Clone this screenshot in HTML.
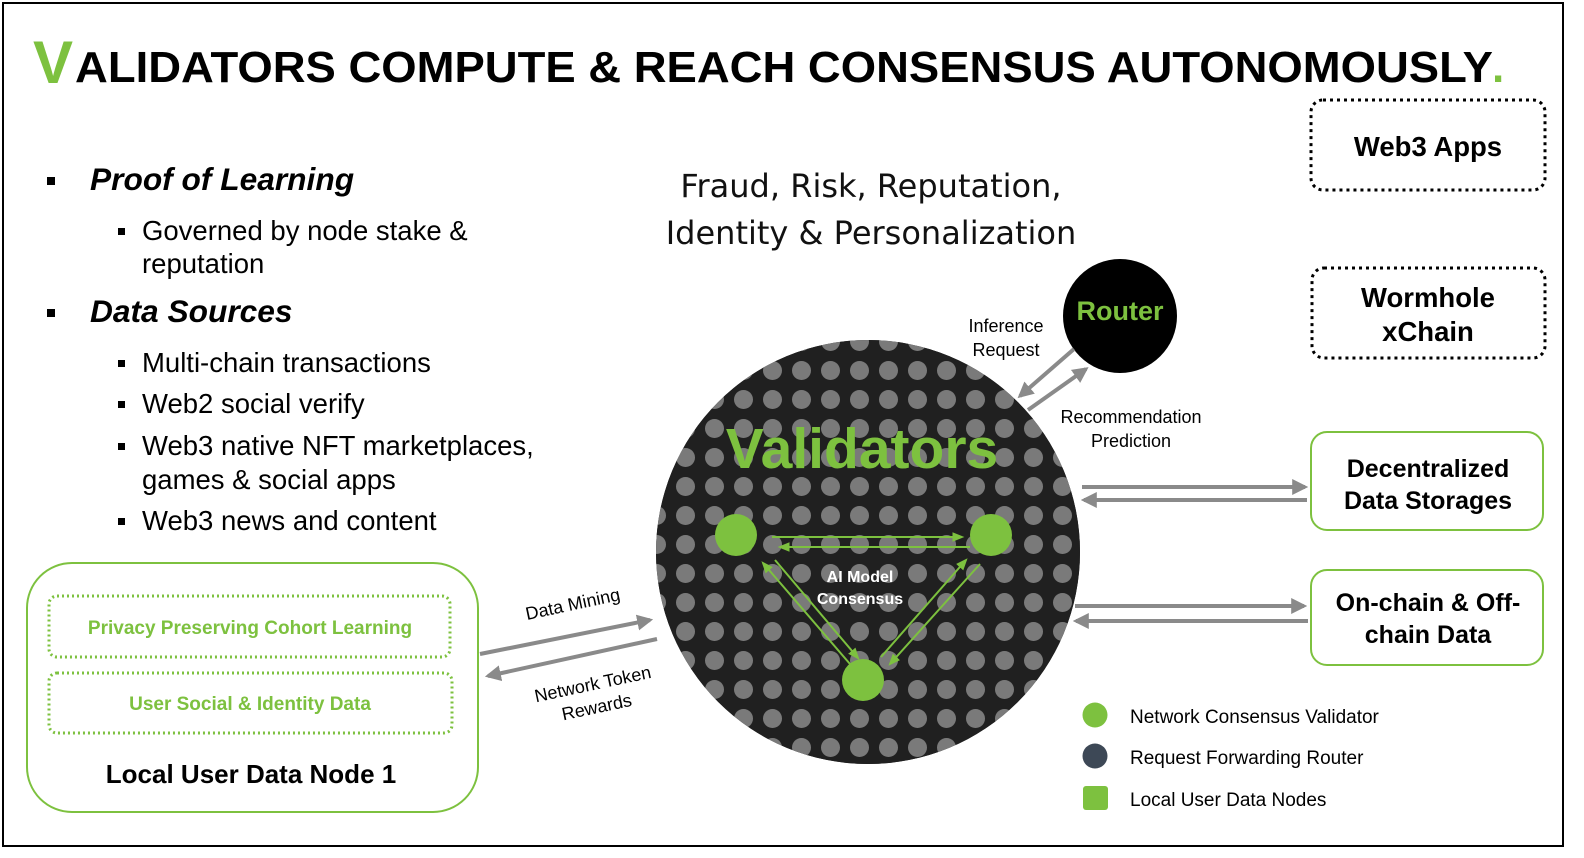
<!DOCTYPE html>
<html><head><meta charset="utf-8"><style>
html,body{margin:0;padding:0;background:#fff;}
svg{display:block;font-family:"Liberation Sans",Arial,sans-serif;}
</style></head><body>
<svg width="1584" height="858" viewBox="0 0 1584 858" xmlns="http://www.w3.org/2000/svg">
<defs>
<pattern id="dots" x="4" y="8" width="29" height="29" patternUnits="userSpaceOnUse">
<rect width="29" height="29" fill="#202020"/>
<circle cx="14.5" cy="14.5" r="9.5" fill="#7a7a7a"/>
</pattern>
<clipPath id="cc"><circle cx="868" cy="552" r="212"/></clipPath>
<marker id="ag" viewBox="0 0 10 10" refX="8" refY="5" markerWidth="4" markerHeight="4" orient="auto"><path d="M0,0 L10,5 L0,10 z" fill="#8a8a8a"/></marker>
<marker id="agr" viewBox="0 0 10 10" refX="8" refY="5" markerWidth="6" markerHeight="6" orient="auto"><path d="M0,1 L10,5 L0,9 z" fill="#7dc13f"/></marker>
</defs>
<rect x="3" y="3" width="1560" height="843" fill="#fff" stroke="#000" stroke-width="2"/>
<text x="33" y="83" font-size="60" font-weight="bold" fill="#7dc13f">V</text>
<text x="75" y="82" font-size="44" font-weight="bold" fill="#000" textLength="1418" lengthAdjust="spacingAndGlyphs">ALIDATORS COMPUTE &amp; REACH CONSENSUS AUTONOMOUSLY</text>
<text x="1492" y="82" font-size="44" font-weight="bold" fill="#7dc13f">.</text>
<rect x="47" y="177" width="8" height="8" fill="#000"/>
<text x="90" y="190" font-size="31.7" font-weight="bold" font-style="italic">Proof of Learning</text>
<rect x="118" y="228" width="7" height="7" fill="#000"/>
<text x="142" y="240" font-size="27.5">Governed by node stake &amp;</text>
<text x="142" y="273" font-size="27.5">reputation</text>
<rect x="47" y="309" width="8" height="8" fill="#000"/>
<text x="90" y="322" font-size="31.7" font-weight="bold" font-style="italic">Data Sources</text>
<g font-size="27.5">
<rect x="118" y="360" width="7" height="7"/><text x="142" y="372">Multi-chain transactions</text>
<rect x="118" y="401" width="7" height="7"/><text x="142" y="413">Web2 social verify</text>
<rect x="118" y="443" width="7" height="7"/><text x="142" y="455">Web3 native NFT marketplaces,</text>
<text x="142" y="489">games &amp; social apps</text>
<rect x="118" y="518" width="7" height="7"/><text x="142" y="530">Web3 news and content</text>
</g>
<g font-family="'DejaVu Sans','Liberation Sans',sans-serif" font-size="32" text-anchor="middle" fill="#111">
<text x="871" y="197">Fraud, Risk, Reputation,</text>
<text x="871" y="244">Identity &amp; Personalization</text>
</g>
<circle cx="868" cy="552" r="212" fill="#202020"/>
<rect x="650" y="335" width="440" height="440" fill="url(#dots)" clip-path="url(#cc)"/>
<text x="862" y="468" font-size="57" font-weight="bold" fill="#7dc13f" text-anchor="middle">Validators</text>
<text x="860" y="582" font-size="16" font-weight="bold" fill="#fff" text-anchor="middle">AI Model</text>
<text x="860" y="604" font-size="16" font-weight="bold" fill="#fff" text-anchor="middle">Consensus</text>
<g stroke="#7dc13f" stroke-width="2" fill="none" marker-end="url(#agr)">
<line x1="772" y1="537" x2="962" y2="537"/>
<line x1="970" y1="547" x2="780" y2="547"/>
<line x1="775" y1="560" x2="858" y2="658"/>
<line x1="850" y1="664" x2="763" y2="563"/>
<line x1="881" y1="657" x2="966" y2="560"/>
<line x1="980" y1="564" x2="890" y2="664"/>
</g>
<circle cx="736" cy="535" r="21" fill="#7dc13f"/>
<circle cx="991" cy="535" r="21" fill="#7dc13f"/>
<circle cx="863" cy="680" r="21" fill="#7dc13f"/>
<circle cx="1120" cy="316" r="57" fill="#000"/>
<text x="1120" y="320" font-size="27" font-weight="bold" fill="#7dc13f" text-anchor="middle">Router</text>
<g stroke="#8a8a8a" stroke-width="4" fill="none" marker-end="url(#ag)">
<line x1="1074" y1="349" x2="1020" y2="396"/>
<line x1="1028" y1="410" x2="1086" y2="369"/>
<line x1="1082" y1="487" x2="1305" y2="487"/>
<line x1="1307" y1="500" x2="1084" y2="500"/>
<line x1="1075" y1="606" x2="1304" y2="606"/>
<line x1="1308" y1="621" x2="1076" y2="621"/>
<line x1="480" y1="654" x2="650" y2="620"/>
<line x1="657" y1="639" x2="488" y2="676"/>
</g>
<g font-size="18" text-anchor="middle">
<text x="1006" y="332">Inference</text>
<text x="1006" y="356">Request</text>
<text x="1131" y="423">Recommendation</text>
<text x="1131" y="447">Prediction</text>
<text transform="translate(574,610) rotate(-12)">Data Mining</text>
<text transform="translate(594,690) rotate(-12)">Network Token</text>
<text transform="translate(598,713) rotate(-12)">Rewards</text>
</g>
<rect x="1311" y="100" width="234" height="90" rx="12" fill="none" stroke="#000" stroke-width="3" stroke-dasharray="3,4"/>
<text x="1428" y="156" font-size="27.5" font-weight="bold" text-anchor="middle">Web3 Apps</text>
<rect x="1312" y="268" width="233" height="90" rx="12" fill="none" stroke="#000" stroke-width="3" stroke-dasharray="3,4"/>
<text x="1428" y="307" font-size="27.5" font-weight="bold" text-anchor="middle">Wormhole</text>
<text x="1428" y="341" font-size="27.5" font-weight="bold" text-anchor="middle">xChain</text>
<rect x="1311" y="432" width="232" height="98" rx="16" fill="none" stroke="#7dc13f" stroke-width="2"/>
<text x="1428" y="477" font-size="25" font-weight="bold" text-anchor="middle">Decentralized</text>
<text x="1428" y="509" font-size="25" font-weight="bold" text-anchor="middle">Data Storages</text>
<rect x="1311" y="570" width="232" height="95" rx="16" fill="none" stroke="#7dc13f" stroke-width="2"/>
<text x="1428" y="611" font-size="25" font-weight="bold" text-anchor="middle">On-chain &amp; Off-</text>
<text x="1428" y="643" font-size="25" font-weight="bold" text-anchor="middle">chain Data</text>
<rect x="27" y="563" width="451" height="249" rx="45" fill="none" stroke="#7dc13f" stroke-width="2"/>
<rect x="49" y="596" width="401" height="61" rx="8" fill="none" stroke="#7dc13f" stroke-width="3" stroke-dasharray="2,3"/>
<text x="250" y="634" font-size="19" font-weight="bold" fill="#7dc13f" text-anchor="middle">Privacy Preserving Cohort Learning</text>
<rect x="49" y="673" width="403" height="60" rx="8" fill="none" stroke="#7dc13f" stroke-width="3" stroke-dasharray="2,3"/>
<text x="250" y="710" font-size="19" font-weight="bold" fill="#7dc13f" text-anchor="middle">User Social &amp; Identity Data</text>
<text x="251" y="783" font-size="26" font-weight="bold" text-anchor="middle">Local User Data Node 1</text>
<circle cx="1095" cy="715" r="12.5" fill="#7dc13f"/>
<circle cx="1095" cy="756" r="12.5" fill="#3d4856"/>
<rect x="1083" y="786" width="25" height="24" rx="3" fill="#7dc13f"/>
<g font-size="19">
<text x="1130" y="723">Network Consensus Validator</text>
<text x="1130" y="764">Request Forwarding Router</text>
<text x="1130" y="806">Local User Data Nodes</text>
</g>
</svg>
</body></html>
